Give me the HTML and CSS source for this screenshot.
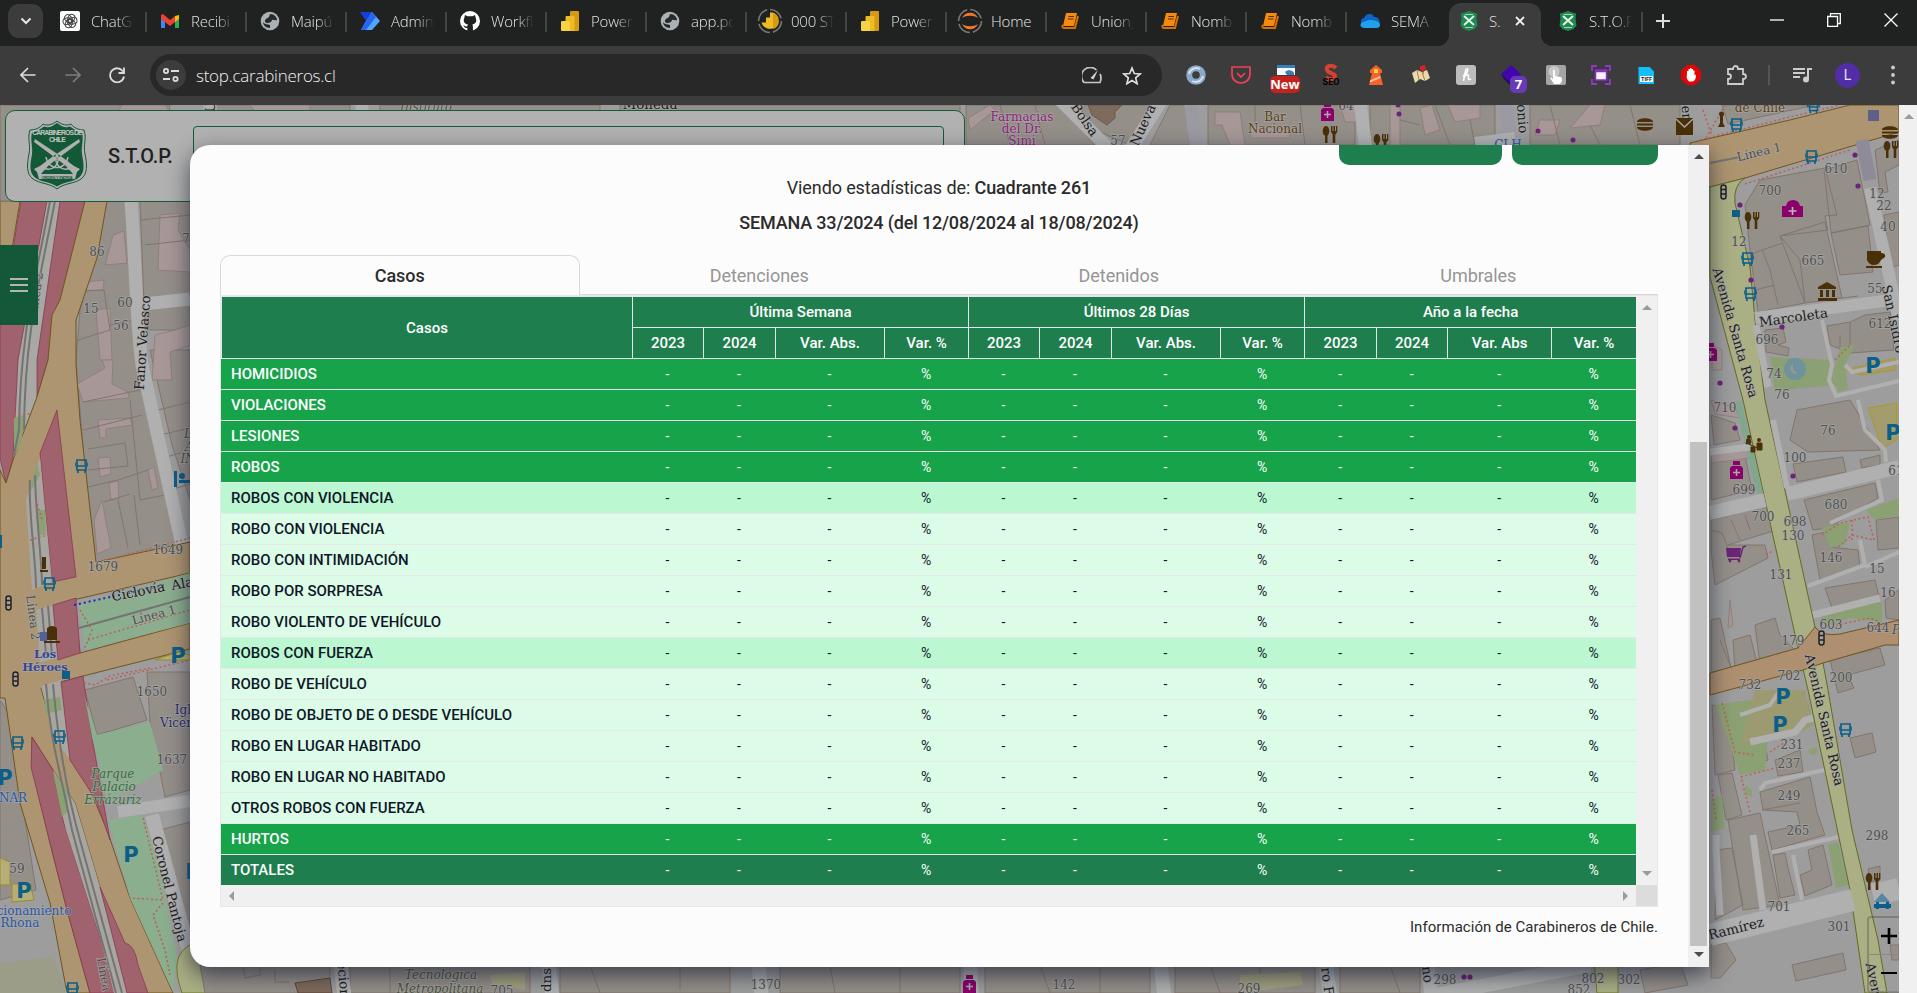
FILE: index.html
```html
<!DOCTYPE html>
<html lang="es">
<head>
<meta charset="utf-8">
<title>S.T.O.P.</title>
<link rel="stylesheet" href="styles.css">
</head>
<body>
<svg class="defs" width="0" height="0">
  <defs>
    <symbol id="shield" viewBox="0 0 62 70">
      <path d="M31 1c5 4 10 5 14 3 3 4 8 6 13 6 3 9-1 14 1 24 2 10 3 20-4 25-7 5-17 4-24 10-7-6-17-5-24-10-7-5-6-15-4-25 2-10-2-15 1-24 5 0 10-2 13-6 4 2 9 1 14-3z" fill="#b0b0b0" stroke="#145937" stroke-width="1"/>
      <path d="M31 3c5 4 9 5 13 3.500 4 3 7 5 12 6 2 8-1 13 0 22 2 10 3 18-3 23-6 5-15 4-22 9-7-5-16-4-22-9-6-5-5-13-3-23 1-9-2-14 0-22 5-1 8-3 12-6 4 1.500 8 .5 13-3.500z" fill="#145937"/>
      <path d="M9 19l27 18 12 9 6 3-6 6-9-10L8 22zM53 19L26 37l-12 9-6 3 6 6 9-10 31-23z" fill="#b0b0b0"/>
      <path d="M20 46c6-12 16-12 22 0M20 37c2 14 20 14 22 0M17 48c10 4 18-4 14-14M45 48c-10 4-18-4-14-14" fill="none" stroke="#b0b0b0" stroke-width="1.500"/>
      <path d="M11 52l5 2h30l5-2-2 7H13z" fill="#b0b0b0"/>
      <text x="31" y="15" class="crest">CARABINEROS DE</text><text x="31" y="22" class="crest">CHILE</text><text x="31" y="58.500" class="crest tiny">ORDEN Y PATRIA</text>
    </symbol>
    <symbol id="crest-sm" viewBox="0 0 18 20"><path d="M9 0l4 1.500 4 1-.5 5 1 7-3 3.500L9 20l-5.500-2-3-3.500 1-7-.5-5 4-1z" fill="#1f8a52"/><path d="M4 5l10 9M14 5L4 14" stroke="#e8f3ec" stroke-width="1.800"/><path d="M5 3.500h8M5 16.500h8" stroke="#a9d3ba"/></symbol>
    <symbol id="globe" viewBox="0 0 20 20"><circle cx="10" cy="10" r="9.300" fill="#aab0b5"/><path d="M10 3c4 0 7 3 7 6-2 1-3-1-5 0l-1 2-3 1c-3 0-4-2-2-4l3-2zM3 11c2 3 5 2 7 3l0 3c-4 0-7-3-7-6z" fill="#242827"/></symbol>
    <symbol id="pbi" viewBox="0 0 20 20"><rect x="10" y="0" width="9" height="20" rx="1" fill="#d39a12"/><rect x="5.500" y="5" width="9" height="15" rx="1" fill="#eebb22"/><rect x="1" y="10" width="9" height="10" rx="1" fill="#f7d348"/></symbol>
    <symbol id="book" viewBox="0 0 20 20"><path d="M6 2h11l-3 13H3z" fill="#f58a0c"/><path d="M18 5l-3 12H4c-2 0-2-2-1-3" fill="none" stroke="#d96e05" stroke-width="2"/><path d="M8.500 5.500h5.500M8 8h5.500" stroke="#4a3010" stroke-width="1.200"/></symbol>
    <symbol id="bus" viewBox="0 0 13 15"><path d="M2 1h9v10H2zM3 11v3M10 11v3M0 3.500v4M13 3.500v4M2 7h9" fill="none" stroke="#0b5f88" stroke-width="1.700"/></symbol>
    <symbol id="food" viewBox="0 0 16 17"><ellipse cx="4" cy="5" rx="3.300" ry="5"/><path d="M3 8h2.500v9H3zM9 0h1.500v5h1V0H13v5h1V0h1.300v6l-2 2.500V17h-2.600V8.500L9 6z"/></symbol>
    <symbol id="burger" viewBox="0 0 18 13"><path d="M1 4c0-5 16-5 16 0zM1 5.500h16v2H1zM1 9h16c0 5-16 5-16 0z"/></symbol>
    <symbol id="pill" viewBox="0 0 13 18"><path d="M3 0h7v4H3zM2 5h9l2 2v11H0V7z" fill="#8b006b"/><path d="M6.500 8v7M3 11.500h7" stroke="#aaa" stroke-width="1.600"/></symbol>
    <symbol id="light" viewBox="0 0 7 16"><rect x="1" y="1" width="5" height="14" rx="2.500" fill="#aaa09a" stroke="#222" stroke-width="1.500"/><path d="M1 5.500h5M1 10h5" stroke="#222" stroke-width="1.500"/></symbol>
  </defs>
</svg>

<header class="browser">
  <div class="tabstrip">
    <div class="tabsearch"><svg viewBox="0 0 12 8" width="12" height="8"><path d="M1.500 1.500L6 6l4.500-4.500" fill="none" stroke="#e6e6e6" stroke-width="2"/></svg></div>
    <div class="tab"><svg viewBox="0 0 20 20"><rect width="20" height="20" rx="2" fill="#fff"/><g fill="none" stroke="#444" stroke-width="1"><rect x="7" y="3" width="6.500" height="8.500" rx="3.200" transform="rotate(20 10 10)"/><rect x="7" y="3" width="6.500" height="8.500" rx="3.200" transform="rotate(80 10 10)"/><rect x="7" y="3" width="6.500" height="8.500" rx="3.200" transform="rotate(140 10 10)"/><rect x="7" y="3" width="6.500" height="8.500" rx="3.200" transform="rotate(200 10 10)"/><rect x="7" y="3" width="6.500" height="8.500" rx="3.200" transform="rotate(260 10 10)"/><rect x="7" y="3" width="6.500" height="8.500" rx="3.200" transform="rotate(320 10 10)"/></g></svg><span>ChatG</span></div>
    <div class="tab"><svg viewBox="0 0 20 20"><path d="M1 4v13h4V9z" fill="#4285f4"/><path d="M19 4v13h-4V9z" fill="#34a853"/><path d="M15 5l4-1v4l-4 3z" fill="#fbbc04"/><path d="M1 4l2-1 7 6 5-4v6l-5 4-9-7z" fill="#ea4335"/></svg><span>Recibi</span></div>
    <div class="tab"><svg><use href="#globe"/></svg><span>Maipú</span></div>
    <div class="tab"><svg viewBox="0 0 20 20"><path d="M0 1h12l-6 9z" fill="#1540d8"/><path d="M6 10L12 1l8 9-8 9H1z" fill="#55a6fb"/><path d="M6 10l6-9 4 5-10 13H1z" fill="#2765f5"/></svg><span>Admin</span></div>
    <div class="tab"><svg viewBox="0 0 20 20"><circle cx="10" cy="10" r="10" fill="#fff"/><path d="M5 4l2.500 1.300h5L15 4l.7 3c1.600 3-.1 6.200-3.500 6.500.8 1 .8 1.500.8 6.500H7.300v-3c-3 .5-3-2-4.500-2.500 2-.3 2.500 1.500 4.500 1 0-1 .3-1.500.8-2C4.400 13.200 2.700 10 4.300 7z" fill="#1f2221"/></svg><span>Workfl</span></div>
    <div class="tab"><svg><use href="#pbi"/></svg><span>Power</span></div>
    <div class="tab"><svg><use href="#globe"/></svg><span>app.po</span></div>
    <div class="tab"><svg class="wide" viewBox="0 0 26 26"><circle cx="13" cy="13" r="11.500" fill="none" stroke="#777" stroke-width="1.600" stroke-dasharray="15 3"/><path d="M13 4.500h3a8.500 8.500 0 1 1-11.500 10H9v-5h4z" fill="#eebb22"/><path d="M16 4.900a8.500 8.500 0 0 1 0 16.200z" fill="#d39a12"/></svg><span>000 ST</span></div>
    <div class="tab"><svg><use href="#pbi"/></svg><span>Power</span></div>
    <div class="tab"><svg class="wide" viewBox="0 0 26 26"><circle cx="13" cy="13" r="11.500" fill="none" stroke="#777" stroke-width="1.600" stroke-dasharray="15 3"/><path d="M5 10c3-7 13-7 16 0-4-3-12-3-16 0zM5 16c3 7 13 7 16 0-4 3-12 3-16 0z" fill="#f37726"/></svg><span class="full">Home</span></div>
    <div class="tab"><svg><use href="#book"/></svg><span>Union_</span></div>
    <div class="tab"><svg><use href="#book"/></svg><span>Nomb</span></div>
    <div class="tab"><svg><use href="#book"/></svg><span>Nomb</span></div>
    <div class="tab last"><svg viewBox="0 0 20 20"><path d="M4 14c-5-2-3-7 0-7 2-5 9-5 10-1 6-1 8 8 2 10z" fill="#0b66c8"/><path d="M4 17c-4 0-5-5-1-6l6-2c5 0 11 1 11 5 0 3-3 3-4 3z" fill="#22a0ee"/></svg><span>SEMA</span></div>
    <div class="tab active"><svg><use href="#crest-sm"/></svg><span class="full">S.</span><svg class="x" viewBox="0 0 10 10"><path d="M1 1l8 8M9 1L1 9" stroke="#eee" stroke-width="1.800"/></svg></div>
    <div class="tab after"><svg><use href="#crest-sm"/></svg><span>S.T.O.P</span></div>
    <svg class="plus" viewBox="0 0 14 14"><path d="M7 0v14M0 7h14" stroke="#ddd" stroke-width="2"/></svg>
    <div class="window">
      <svg viewBox="0 0 14 14"><path d="M0 7h14" stroke="#fff" stroke-width="1.300"/></svg>
      <svg viewBox="0 0 14 14"><path d="M.7 3.500h9.800v9.800H.7zM3.500 3.500V.7h9.800v9.800h-2.800" fill="none" stroke="#fff" stroke-width="1.300"/></svg>
      <svg viewBox="0 0 14 14"><path d="M.5.5l13 13M13.500.5l-13 13" stroke="#fff" stroke-width="1.300"/></svg>
    </div>
  </div>
  <div class="toolbar">
    <svg class="nav" viewBox="0 0 16 16"><path d="M15.500 8H1.500M8 1L1 8l7 7" fill="none" stroke="#ddd" stroke-width="1.700"/></svg>
    <svg class="nav" viewBox="0 0 16 16"><path d="M.5 8h14M8 1l7 7-7 7" fill="none" stroke="#7d7d7d" stroke-width="1.700"/></svg>
    <svg class="nav" viewBox="0 0 16 16"><path d="M14 4.500A7 7 0 1 0 15 9.500M15 .5v5.500H9.500" fill="none" stroke="#ddd" stroke-width="1.800"/></svg>
    <div class="omnibox">
      <div class="site"><svg width="16" height="14" viewBox="0 0 16 14"><path d="M8 3h8M0 11h7" stroke="#ddd" stroke-width="2"/><circle cx="3" cy="3" r="2.100" fill="none" stroke="#ddd" stroke-width="1.800"/><circle cx="12.500" cy="11" r="2.100" fill="none" stroke="#ddd" stroke-width="1.800"/></svg></div>
      <span class="url">stop.carabineros.cl</span>
      <svg width="20" height="17" viewBox="0 0 20 17"><path d="M14.500 3a8.600 8.600 0 0 0-12.500 12.500h16c1.300-3 1.300-6 0-8.500" fill="none" stroke="#c8c8c8" stroke-width="1.700"/><path d="M8.500 11L16 3l-4.500 9.500z" fill="#d0d0d0"/></svg>
      <svg width="20" height="19" viewBox="0 0 20 19"><path d="M10 2l2.300 5.500 5.900.5-4.500 3.900 1.400 5.800L10 14.600l-5.100 3.100 1.400-5.800L1.800 8l5.900-.5z" fill="none" stroke="#ddd" stroke-width="1.700"/></svg>
    </div>
    <div class="extensions">
      <i><svg viewBox="0 0 20 20"><circle cx="10" cy="10" r="6.800" fill="none" stroke="#8ba9c6" stroke-width="6"/><path d="M3 9a7.500 7.500 0 0 1 11-5M17 11a7.500 7.500 0 0 1-11 5" fill="none" stroke="#d3e0ee" stroke-width="2"/></svg></i>
      <i><svg viewBox="0 0 20 20"><path d="M1 2h18v7c0 12-18 12-18 0zM6 8l4 4 4-4" fill="none" stroke="#ef4056" stroke-width="1.700"/></svg></i>
      <i><svg viewBox="0 0 20 20"><path d="M1 0h18v10H1z" fill="#f5f8fa"/><path d="M1 0h18v3H1zM9 7c3-3 8-2 9 1v2h-7z" fill="#397fb5"/></svg><b class="new">New</b></i>
      <i><svg viewBox="0 0 20 20"><path d="M15 3C11-1 4 1 6 5s8 3 8 6-6 5-9 1" fill="none" stroke="#d8402f" stroke-width="4"/><text x="10" y="20" class="seo">SEO</text></svg></i>
      <i><svg viewBox="0 0 20 20"><path d="M4 5l6-5 6 5v3H4zM6 8h8l3 12H3z" fill="#f4642a"/><path d="M8 4h4v4H8z" fill="#ffd545"/><path d="M4 15.500l10-4.500 .5 2L4 17.500z" fill="#ffc2a0"/></svg></i>
      <i><svg viewBox="0 0 20 20"><path d="M1 8l5-3 5 2 5-2 3 8-5 3-5-2-5 4z" fill="#ead9ab"/><path d="M6 5l2 10M11 7l3 9" stroke="#a88247"/><path d="M9 1l5-1 1 4-2 2v4l-1-4-3-1z" fill="#d2222c"/></svg></i>
      <i><svg viewBox="0 0 20 20"><rect width="20" height="20" rx="3" fill="#bcbcbc"/><path d="M7.500 16L9.500 6c.5-3 3-3 2 0-.5 2-2 4-4.500 5M8.500 12c2-3 4.500-3 4 0s0 3 2.500 2" fill="none" stroke="#fff" stroke-width="1.600"/></svg></i>
      <i><svg viewBox="0 0 20 20"><path d="M10 0l10 9-10 9L0 9z" fill="#4206ac"/><path d="M0 9l10 9v3L3 14z" fill="#210764"/></svg><b class="seven">7</b></i>
      <i><svg viewBox="0 0 20 20"><rect width="20" height="20" rx="2" fill="#a5a5a5"/><circle cx="8" cy="6.500" r="5.500" fill="#c8c8c8"/><path d="M7 5c2-1 2 1 2 6l6 1c2 2 1 5-1 7H8l-4-6c1-1 2 0 3 1z" fill="#fff"/></svg></i>
      <i><svg viewBox="0 0 20 20"><path d="M1 6V1h5M14 1h5v5M19 14v5h-5M6 19H1v-5" fill="none" stroke="#9137c9" stroke-width="1.800"/><rect x="4.500" y="5" width="11" height="10" fill="#f8efff" stroke="#8a2ec6" stroke-width="1.500"/><path d="M4 6h12" stroke="#8a2ec6" stroke-width="2.500"/></svg></i>
      <i><svg viewBox="0 0 20 20"><path d="M2.500 2h11L18 6.500V19H2.500z" fill="#13c0fb"/><rect x="4" y="11" width="13" height="6" fill="#fff"/><text x="10.500" y="16.300" class="tiff">TIFF</text></svg></i>
      <i><svg viewBox="0 0 20 20"><path d="M6 0h8l6 6v8l-6 6H6l-6-6V6z" fill="#e30505"/><path d="M6 9V6h1.500V4H9V3h1.500v1H12v1.500h1.500v5l1.500-1c0 4-1 6-3 7H8c-2-2-3-4-2-7.500z" fill="#fff"/></svg></i>
      <i><svg viewBox="0 0 20 20"><path d="M2 4h5c0-4 5-4 5 0h5v5c4 0 4 5 0 5v5H2v-5c4 0 4-5 0-5z" fill="none" stroke="#ccc" stroke-width="1.800"/></svg></i>
    </div>
    <div class="rule"></div>
    <svg class="music" viewBox="0 0 20 16"><path d="M0 2h12M0 6h12M0 10h7" stroke="#ccc" stroke-width="1.800"/><path d="M15 12V2h4" fill="none" stroke="#ccc" stroke-width="2"/><circle cx="13" cy="12.500" r="3" fill="#ccc"/></svg>
    <div class="avatar">L</div>
    <svg class="dots" viewBox="0 0 4 20"><circle cx="2" cy="2.500" r="1.900"/><circle cx="2" cy="10" r="1.900"/><circle cx="2" cy="17.500" r="1.900"/></svg>
  </div>
</header>

<main class="page">
  <svg class="map" viewBox="0 105 1899 888" width="1899" height="888">
    <rect y="105" width="1899" height="888" fill="#9d9d9d"/>
    <!-- west blocks -->
    <g class="bld">
      <path d="M106 201L128 201 137 330 155 400 170 480 183 545 96 568 84 460 76 360 80 310z"/>
      <path d="M140 201H190V330H145zM150 350H190V500L172 445z"/>
      <path d="M85 690L133 677 147 720 97 735zM147 672H190V790L165 797 150 722z"/>
      <path d="M160 830L190 822V930L175 900zM0 700L8 712 22 800 36 890 0 900z"/>
    </g>
    <g class="pink">
      <path d="M113 235L124 231 127 263 105 265zM85 282L104 280 103 290 82 291zM96 310L110 308 112 360 100 360z"/>
      <path d="M160 215L180 213 178 230 190 250 190 272 158 270zM155 335L175 330 190 325V345L170 352 172 380H152z"/>
      <path d="M77 384L105 368 102 360H113L112 384 128 392 129 398 83 402zM98 420L130 418 132 425 106 429V438L100 438zM98 458L110 457 111 474 100 477zM94 520L102 500 111 548 97 554zM109 483L118 481 119 498 111 500zM148 470L154 467 158 488 152 490z"/>
    </g>
    <g class="lines"><path d="M83 402L140 390M83 430L142 415M88 449L125 443 128 466 88 470M88 487L118 480 148 470M104 502L130 494M118 500L128 548M134 495L140 545M130 400L140 500 165 495M158 410L190 402M160 435L190 428M163 458L190 450M170 490L190 484M140 220L190 215M145 245L190 240M80 291L104 290 110 330 78 340M110 325L135 320"/></g>
    <path d="M131 201C136 270 136 320 142 365L182 545" class="white" style="stroke-width:13"/>
    <path d="M144 304L190 299" class="white" style="stroke-width:13"/>
    <path d="M20 201H0V345L6 483 13 460 37 397 60 201z" fill="#a8a8a4"/>
    <path d="M0 201H20L13 243 0 320z" class="orange"/>
    <path d="M21 201H47L18 360 13 458 6 483 0 458V330L14 243z" class="mag"/>
    <path d="M60 201H85L61 315 48 360 37 397V360z" class="mag"/>
    <path d="M85 201H107L97 258 76 320V365L80 420 96 562 190 542V573L73 600 80 653 190 623V649L83 676 61 682 41 688 47 710 60 743 90 790 107 830 130 898 173 993H147L125 943 117 943 100 887 75 803 53 770 32 737 32 767 50 843 67 910 90 993H67L50 903 20 803 5 698H0V470L6 483 13 460 37 397 48 360 52 315 60 300z" class="orange"/>
    <path d="M57 410L76 577 52 582 40 453z" class="mag"/>
    <path d="M40 457L52 582 32 590 26 500z" fill="#a8a6a1"/>
    <path d="M36 610L54 605 59 658 40 662zM41 686L61 680 70 760 55 740z" fill="#a8a6a1"/>
    <path d="M53 605L76 598 80 653 58 660zM61 682L83 676 92 737 110 840 96 800 70 760z" class="mag"/>
    <path d="M32 737L53 770 63 820 100 937 118 993H90L67 910 50 843 31 767z" class="mag"/>
    <path d="M53 770L75 803 100 887 127 993H114L100 937 66 830z" fill="#a8a6a1"/>
    <path d="M100 887L125 943Q135 945 138 965L148 993H127z" class="mag"/>
    <path d="M14 418L24 415 22 440 14 457zM37 462L40 475 28 496zM37 510H45L46 535H38zM44 700L60 697 62 710 46 714zM53 772L68 790 67 812 62 817z" fill="#8ba073"/>
    <g class="rail"><path d="M50 201C38 270 20 330 19 430L14 455M55 201C40 280 25 330 24 430M30 480C28 510 36 560 36 588M35 475C36 520 42 560 42 585M42 608L46 655M48 606L52 655M46 684C50 740 60 770 72 830L116 993M53 684C58 740 66 790 80 840L122 993"/></g>
    <path d="M79 605L190 573V623L85 650z" fill="#8aae8e"/>
    <path d="M85 698L97 735 150 722 163 770 108 802 92 737z" fill="#8aae8e"/>
    <path d="M108 820L143 815 160 870 177 957 173 992 130 898z" fill="#8aae8e"/>
    <path d="M118 812L190 801" class="white" style="stroke-width:12"/>
    <path d="M152 815L190 955" class="white" style="stroke-width:14"/>
    <path d="M0 963L53 957 67 993H0z" fill="#9c9d88"/>
    <path d="M190 945C172 955 176 975 182 993H215L220 970z" fill="#abaf84" stroke="#6d7a25"/>
    <path d="M79 628L190 597" class="rail" style="stroke-width:2"/>
    <path d="M74 605L165 585" fill="none" stroke="#2226b5" stroke-width="2" stroke-dasharray="2 3"/>
    <g class="dots-red"><path d="M106 560L190 538M88 640L190 610M80 610L92 630 84 650M107 680L190 660M84 683L95 685 110 676 150 668M143 818L163 900 130 898M163 903L153 915 165 950 170 975M30 540L48 535M36 500L42 520M14 414L32 414"/></g>
    <path d="M0 858L10 862V885H0zM12 884L30 884 34 900 12 902zM155 660L178 652 190 655V660z" fill="#b5ae76" stroke="#9c8b2c"/>
    <g class="lbl">
      <text x="97" y="256">86</text><text x="91" y="313">15</text><text x="125" y="307">60</text><text x="121" y="330">56</text><text x="186" y="243">7</text>
      <text x="103" y="571">1679</text><text x="168" y="554">1649</text><text x="152" y="696">1650</text><text x="172" y="764">1637</text><text x="17" y="873">59</text>
      <text transform="translate(40 295) rotate(-82)">Línea 2</text><text transform="translate(29 618) rotate(83)">Línea 2</text><text transform="translate(155 619) rotate(-15)">Línea 1</text><text transform="translate(100 975) rotate(80)">Línea</text>
    </g>
    <g class="street">
      <text transform="translate(147 343) rotate(-86)">Fanor Velasco</text><text transform="translate(139 596) rotate(-11)">Ciclovía</text><text transform="translate(183 588) rotate(-11)">Ala</text><text transform="translate(165 890) rotate(76)">Coronel Pantoja</text>
    </g>
    <g class="place"><text x="45" y="658" class="bold">Los</text><text x="45" y="671" class="bold">Héroes</text><text x="13" y="802" fill="#2a58a8">NAR</text><text x="34" y="915" fill="#2a58a8">cionamiento</text><text x="20" y="927" fill="#2a58a8">Rhona</text><text x="183" y="714" fill="#2b2b66">Igl</text><text x="177" y="727" fill="#2b2b66">Vicen</text>
      <g class="it" fill="#2f7038"><text x="113" y="778">Parque</text><text x="114" y="791">Palacio</text><text x="113" y="804">Errázuriz</text></g><g class="it"><text x="188" y="438">L</text><text x="189" y="451">A</text><text x="188" y="463">IN</text></g></g>
    <g class="park"><text x="178" y="663">P</text><text x="131" y="862">P</text><text x="24" y="898">P</text><text x="5" y="785">P</text><text x="193" y="879">P</text></g>
    <g><use href="#bus" x="75" y="459" width="13" height="15"/><use href="#bus" x="43" y="577" width="13" height="15"/><use href="#bus" x="11" y="736" width="13" height="15"/><use href="#bus" x="53" y="730" width="13" height="15"/><use href="#bus" x="66" y="982" width="13" height="15"/><use href="#light" x="5" y="595" width="7" height="16"/><use href="#light" x="12" y="671" width="7" height="16"/></g>
    <path d="M62 671h8v8h-8zM0 535h2v13H0zM174 471h3v16h-3zM179 480h14v3h-14z" fill="#0b5f88"/><circle cx="182" cy="476" r="3" fill="#0b5f88"/>
    <path d="M40 632h7v9h-7z" fill="#54609a"/><path d="M47 628q5-4 10 0v12H47zM44 641h16v2H44zM42 557h4v12h-4zM40 570h8v2h-8z" fill="#4a3008"/>

    <!-- north strip -->
    <g class="bld"><path d="M0 105H170L160 201H0zM215 105H350V145H215zM380 105H600V145H380zM620 105H960V145H620zM966 105H1060L1095 145H966zM1065 105H1165L1130 145 1095 130zM1170 105H1190V145H1150zM1208 105H1355V145H1208zM1370 105H1495V145H1370zM1530 105H1680V145H1530z"/></g>
    <g class="pink"><path d="M122 105H165L170 112H118zM250 105H310V112H255zM968 118L990 105 995 110 970 130zM1070 105H1085L1080 118zM1215 112H1240L1245 145H1230L1222 125H1215zM1250 125L1290 130V138H1250zM1340 105H1360V122H1345zM1390 105H1400V145H1390zM1420 108L1432 105 1440 130 1425 135zM1448 105H1480V118L1455 122zM1540 120H1560L1555 135H1535zM1590 105H1605L1600 125 1570 128z"/></g>
    <g class="lines"><path d="M1000 105L1010 145M1035 105L1045 145M1255 105V125M1300 105L1305 145M1400 120L1420 125M1435 105L1450 145M1470 120L1475 145M1550 105L1560 145M1590 125L1600 145M1630 105L1640 145"/></g>
    <path d="M1088 105H1122L1115 112V118L1107 125 1092 115z" fill="#7f6b5b" stroke="#6e5a4b"/>
    <path d="M1060 100L1110 150M1165 95L1130 150M1360 100L1366 150M210 100V150M362 100V115" class="white" style="stroke-width:13"/>
    <path d="M1190 100L1197 150M1505 100L1512 150" class="white" style="stroke:#9b9aa2;stroke-width:13"/>
    <path d="M1475 143L1515 138" class="white" style="stroke-width:12"/>
    <g class="place"><text x="426" y="111" class="it">Instituto</text><g fill="#8f2479"><text x="1022" y="121">Farmacias</text><text x="1022" y="133">del Dr.</text><text x="1022" y="145">Simi</text></g><g fill="#5b4016"><text x="1275" y="121">Bar</text><text x="1275" y="133">Nacional</text></g><text x="1508" y="149" fill="#2a58a8">CLH</text></g>
    <g class="street"><text transform="translate(1081 122) rotate(55)">Bolsa</text><text transform="translate(1147 127) rotate(-66)">Nueva</text><text transform="translate(1518 119) rotate(86)">onio</text><text transform="translate(1682 113) rotate(83)">er</text><text transform="translate(215 107) rotate(-90)">U</text><text x="650" y="109">Moneda</text></g>
    <g class="lbl"><text x="1118" y="145">57</text><text x="1346" y="110">64</text></g>
    <use href="#pill" x="1321" y="103" width="13" height="18"/><g fill="#4a3008"><use href="#food" x="1322" y="126" width="16" height="17"/><use href="#food" x="1373" y="134" width="16" height="17"/><use href="#burger" x="1636" y="118" width="18" height="13"/></g>
    <g fill="#6c2476"><circle cx="1399" cy="114" r="2.500"/><circle cx="1398" cy="105" r="2.500"/><circle cx="1538" cy="131" r="2.500"/><circle cx="1573" cy="140" r="2.500"/></g>

    <!-- east blocks -->
    <g class="bld">
      <path d="M1722 105H1815L1728 124zM1745 205L1760 180 1825 168 1837 215 1825 216 1828 230 1780 236 1800 260 1805 303 1758 312 1750 250zM1824 170L1857 160 1870 225 1831 233zM1831 233L1868 226 1873 272 1840 275zM1780 236L1825 222 1842 298 1805 303zM1875 150L1899 140V165L1885 172 1888 192 1880 193zM1884 215L1899 212V265L1890 268z"/>
      <path d="M1765 330L1783 328 1786 342 1778 345 1789 348 1788 356 1766 352zM1827 326L1850 322 1865 315 1890 312 1894 350 1850 353 1830 345z"/>
      <path d="M1797 410L1850 400 1880 450 1808 452 1790 440zM1793 464L1843 457 1846 472 1797 482zM1860 460L1880 455V465L1862 468zM1804 500L1875 483 1878 498 1828 528 1813 530zM1812 535L1825 532 1830 547 1858 550 1860 568 1820 580zM1825 588L1875 580 1880 600 1832 608zM1876 520L1899 517V548L1878 550zM1885 600L1899 590V620L1886 618z"/>
      <path d="M1711 415L1735 423 1740 440 1714 445zM1711 460L1745 455 1752 490 1711 500zM1711 520L1770 505 1776 530 1728 545 1765 545 1768 558 1715 585 1711 550zM1711 620L1720 618 1732 672 1711 672zM1733 640L1750 635 1758 666 1735 670zM1755 625L1775 618 1780 635 1795 650 1760 665z"/>
      <path d="M1830 660L1880 648 1885 665 1848 675 1854 688 1838 693zM1850 738L1872 733 1876 752 1855 758zM1712 705L1728 708 1735 770 1715 775zM1760 715L1808 705 1812 725 1768 735zM1748 750L1765 746 1768 760 1752 765zM1775 760L1800 750 1803 772 1778 776zM1718 775L1732 773 1742 815 1726 820zM1760 792L1810 777 1817 812 1825 835 1772 850 1768 832 1800 825 1797 812 1763 810z"/>
      <path d="M1728 820L1760 813 1780 905 1743 910zM1716 850L1732 848 1743 905 1715 920zM1773 855L1785 853 1788 868 1795 895 1780 898zM1808 850L1823 845 1832 885 1805 896 1800 875 1812 870zM1711 945L1726 943 1736 960 1720 978H1711zM1792 965L1843 953 1846 970 1796 981zM1868 869L1880 866V880L1870 882zM1890 945H1899V960H1892z"/>
    </g>
    <g class="pink"><path d="M1711 400L1735 408 1740 418 1715 414zM1712 345L1722 350V370H1712zM1711 455L1750 450V458L1712 463zM1730 600L1733 625 1728 628z"/></g>
    <g class="lines"><path d="M1750 255L1762 250 1770 270 1778 305M1762 250L1783 243M1755 290L1775 285M1842 298L1858 296M1711 530L1722 533 1728 548M1731 520L1740 540M1745 515L1750 530M1720 640L1740 690M1840 355V335M1850 322V345M1762 810L1800 803"/></g>
    <path d="M1770 357L1832 360 1836 385 1800 388 1775 392zM1855 345L1840 347 1833 375 1838 392 1848 390 1845 365zM1822 527L1850 522 1845 545 1830 548zM1866 510L1899 498V515L1875 520zM1820 610L1882 602V622L1850 618 1825 627z" fill="#8ba073"/>
    <path d="M1715 705L1750 700 1770 715 1765 770 1740 775 1728 740zM1711 800L1722 795 1725 828 1711 832zM1828 845L1838 842 1848 885 1836 888zM1808 750L1817 747V754L1810 755zM1745 785L1752 790V797L1746 795z" fill="#8ba073"/>
    <path d="M1868 408L1897 403V440L1882 448zM1845 370L1895 358 1896 370 1860 375z" fill="#a39c6c" stroke="#aa9a28"/>
    <path d="M1755 690L1805 690 1813 725 1800 732 1760 740 1740 748 1745 725z" fill="#9c9a70"/>
    <circle cx="1795" cy="369" r="11" fill="#6f929c"/><path d="M1793 364a5 5 0 1 0 5 9q-6-2-5-9z" fill="#9b9694"/>
    <path d="M1690 143L1790 120 1850 105H1899V132L1745 178 1710 187 1690 190z" class="orange"/>
    <path d="M1710 187L1745 178Q1733 185 1735 203L1750 267 1756 330 1765 400 1815 627 1823 663 1828 690 1852 830 1878 940 1887 993H1865L1850 890 1808 690 1798 648 1765 500 1743 400 1710 277z" class="yel"/>
    <path d="M1738 402L1760 493" stroke="#7ea78b" stroke-width="6"/>
    <path d="M1710 673L1798 648 1815 627Q1822 637 1840 634L1899 620V645H1885L1823 663 1803 670 1710 695z" fill="#ae9070" stroke="#6f551e"/>
    <g class="white"><path d="M1755 318L1899 299" style="stroke-width:12"/><path d="M1862 140L1870 180" style="stroke:#8d8b98;stroke-width:13"/><path d="M1870 188L1899 320" style="stroke-width:12"/><path d="M1710 513L1765 500M1787 494L1899 467" style="stroke-width:14"/><path d="M1773 420L1787 488" style="stroke-width:6"/><path d="M1756 325L1768 387" style="stroke-width:7"/><path d="M1710 452L1750 447M1813 615L1880 598" style="stroke-width:7"/><path d="M1710 935L1853 900M1873 895L1899 889" style="stroke-width:22"/><path d="M1716 835V850L1720 915M1753 835L1763 910" style="stroke-width:7"/><path d="M1822 320L1832 365 1829 380 1836 396 1899 381M1858 400L1865 430 1885 450 1886 462M1878 480L1882 500 1830 523M1860 540L1865 565 1808 586M1865 567L1899 552M1760 790L1765 783 1824 770M1772 852L1838 837M1793 855L1802 900M1740 715L1770 705 1780 690M1845 365L1852 372 1899 362" style="stroke-width:4"/><path d="M1750 742L1795 732 1805 720 1813 718" style="stroke-width:7"/></g>
    <g class="dots-red"><path d="M1700 140L1790 117 1840 105M1745 184L1850 150M1703 110L1712 136M1725 105L1705 140M1835 360L1850 345M1822 535L1840 523 1868 517 1874 540 1852 535 1837 548M1852 520V540M1823 628L1870 618 1880 622M1722 703L1735 752 1755 755M1750 812L1741 777 1775 768M1712 790L1716 820M1766 555L1774 550M1770 752L1785 742"/></g>
    <path d="M1710 163L1740 157" class="rail" style="stroke-width:2"/>
    <g class="lbl"><text x="1836" y="173">610</text><text x="1770" y="195">700</text><text x="1877" y="198">12</text><text x="1884" y="210">22</text><text x="1888" y="231">40</text><text x="1739" y="246">12</text><text x="1813" y="265">665</text><text x="1875" y="293">55</text><text x="1880" y="328">612</text><text x="1767" y="344">696</text><text x="1774" y="378">74</text><text x="1782" y="399">76</text><text x="1725" y="412">710</text><text x="1828" y="435">76</text><text x="1795" y="462">100</text><text x="1744" y="494">699</text><text x="1836" y="509">680</text><text x="1763" y="521">700</text><text x="1795" y="526">698</text><text x="1793" y="540">130</text><text x="1831" y="562">146</text><text x="1781" y="579">131</text><text x="1877" y="573">15</text><text x="1888" y="597">16</text><text x="1896" y="475">61</text><text x="1831" y="629">603</text><text x="1878" y="632">644</text><text x="1793" y="645">179</text><text x="1789" y="680">702</text><text x="1750" y="689">732</text><text x="1841" y="682">200</text><text x="1792" y="749">231</text><text x="1789" y="768">237</text><text x="1789" y="800">249</text><text x="1798" y="835">265</text><text x="1877" y="840">298</text><text x="1779" y="911">701</text><text x="1839" y="931">301</text><text transform="translate(1760 156) rotate(-14)">Línea 1</text></g>
    <g class="street"><text transform="translate(1794 322) rotate(-8)">Marcoleta</text><text transform="translate(1731 334) rotate(74)">Avenida Santa Rosa</text><text transform="translate(1820 721) rotate(77)">Avenida Santa Rosa</text><text transform="translate(1889 320) rotate(78)">San Isidro</text><text transform="translate(1737 933) rotate(-14)">Ramírez</text><text transform="translate(1869 980) rotate(78)">Aven</text></g>
    <g class="place"><text x="1760" y="112" fill="#5b4016">de Chile</text><text x="1896" y="634" class="it" fill="#2f7038">P</text></g>
    <g class="park"><text x="1873" y="373">P</text><text x="1893" y="440">P</text><text x="1783" y="704">P</text><text x="1780" y="732">P</text></g>
    <g><use href="#bus" x="1730" y="118" width="13" height="15"/><use href="#bus" x="1807" y="101" width="13" height="13"/><use href="#bus" x="1805" y="150" width="13" height="15"/><use href="#bus" x="1741" y="252" width="13" height="15"/><use href="#bus" x="1744" y="287" width="13" height="15"/><use href="#bus" x="1839" y="723" width="13" height="15"/><use href="#light" x="1720" y="184" width="7" height="16"/><use href="#light" x="1818" y="630" width="7" height="16"/></g>
    <g fill="#4a3008"><use href="#food" x="1744" y="212" width="16" height="17"/><use href="#food" x="1883" y="141" width="16" height="17"/><use href="#food" x="1865" y="873" width="16" height="17"/><use href="#burger" x="1881" y="126" width="18" height="13"/><path d="M1676 118h17v17h-17zM1818 287L1827 282 1836 287V289H1818zM1820 290h3v7h-3zM1826 290h3v7h-3zM1832 290h3v7h-3zM1818 298h19v3h-19zM1867 251h14v2q5 0 4 4l-4 3q-2 5-7 5t-7-5zM1866 266h16v2h-16zM1720 115h3v8l2 4h-7l2-4z"/><circle cx="1721.500" cy="114" r="2.500"/><path d="M1747 439l3 0 1 4-5 1zM1746 443l12 5M1757 443h5v7h-5zM1751 447h4v5h-4z" stroke="#4a3008"/><circle cx="1749" cy="437" r="2"/><circle cx="1759" cy="440" r="2"/></g>
    <path d="M1676 119l8.500 8 8.500-8" fill="none" stroke="#aaa" stroke-width="1.300"/>
    <path d="M1782 206h4q1-6 7-6t7 6h3v11h-21z" fill="#8b006b"/><path d="M1792.500 207v8M1788.500 211h8" stroke="#bbb" stroke-width="1.600"/>
    <use href="#pill" x="1730" y="461" width="13" height="18"/><use href="#pill" x="1704" y="343" width="13" height="18"/>
    <path d="M1726 548h15l-1 9h-13zM1728 558.500h12v1.500h-12z" fill="#6c2476"/><path d="M1740 558l3-11 3-1" fill="none" stroke="#6c2476" stroke-width="1.500"/><g fill="#6c2476"><circle cx="1730" cy="561" r="1.400"/><circle cx="1739" cy="561" r="1.400"/></g>
    <path d="M1732 210h8v7h-8zM1874 904h17v4h-17zM1876 901h3v8h-3zM1886 901h3v8h-3z" fill="#0b5f88"/><path d="M1874 902l8-9 8 9z" fill="#5387a3"/><path d="M1868 110h11v11h-11z" fill="#5d6187"/>
    <g fill="#6c2476"><circle cx="1855" cy="155" r="2.600"/><circle cx="1858" cy="186" r="2.600"/><circle cx="1740" cy="205" r="2.600"/><circle cx="1751" cy="280" r="2.600"/><circle cx="1782" cy="327" r="2.600"/><circle cx="1720" cy="383" r="2.600"/><circle cx="1735" cy="428" r="2.600"/><circle cx="1793" cy="476" r="2.600"/></g>

    <!-- south strip -->
    <g class="bld"><path d="M200 965H330V993H205zM350 965H530V993H350zM560 965H730V993H560zM780 965H960V993H780zM985 965H1150V993H985zM1175 965H1315V993H1175zM1340 965H1420V993H1340zM1640 970L1680 963 1688 985 1645 993z"/></g>
    <g class="lines"><path d="M243 965L245 978 260 975V965M275 970V982H290M390 965V993M590 965L600 993M680 965V990M830 965L835 993M900 965V993M1040 965L1050 993M1100 965V993M1210 965L1220 993M1260 965V985M1390 965L1400 993"/></g>
    <path d="M295 983L330 978 332 993H298z" fill="#7f6b5b" stroke="#5d4738"/>
    <path d="M340 960L345 1000M548 960L553 1000M758 960L762 1000M970 960L972 1000M1160 960L1165 1000M1325 960L1331 1000M1427 960L1432 1000M1435 995L1590 965" class="white" style="stroke-width:14"/>
    <path d="M1594 960H1618V993H1597z" fill="#abaf84" stroke="#717428"/>
    <path d="M1240 975L1300 972 1303 985 1240 993zM490 975L525 972V990L492 985z" fill="#a2a07f"/>
    <g class="place"><g class="it"><text x="441" y="979">Tecnológica</text><text x="440" y="993">Metropolitana</text></g></g>
    <g class="lbl"><text x="502" y="995">705</text><text x="766" y="989">1370</text><text x="1064" y="989">142</text><text x="1249" y="993">269</text><text x="1445" y="984">298</text><text x="1593" y="983">802</text><text x="1629" y="984">302</text><text x="1579" y="994">852</text></g>
    <g class="street"><text transform="translate(339 980) rotate(85)">ecion</text><text transform="translate(551 980) rotate(-90)">dns</text><text transform="translate(1323 982) rotate(83)">ro F</text><text transform="translate(1423 975) rotate(83)">no</text></g>
    <use href="#pill" x="963" y="975" width="13" height="18"/><g fill="#6c2476"><circle cx="1464" cy="977" r="2.600"/><circle cx="1470" cy="977" r="2.600"/></g>
  </svg>

  <div class="searchpanel">
    <svg class="logo" width="62" height="70"><use href="#shield"/></svg>
    <span class="brand">S.T.O.P.</span>
    <div class="field"></div>
  </div>
  <div class="menu"><span></span><span></span><span></span></div>
  <div class="zoomctl"><svg viewBox="0 0 16 16" width="16" height="16"><path d="M8 0v16M0 8h16" stroke="#000" stroke-width="2.600"/></svg><svg viewBox="0 0 16 16" width="16" height="16"><path d="M0 8h16" stroke="#000" stroke-width="2"/></svg></div>
  <div class="pagebar"><i class="up"></i></div>

  <section class="modal">
    <div class="content">
      <div class="buttons"><b></b><b></b></div>
      <p class="viewing">Viendo estadísticas de: <strong>Cuadrante 261</strong></p>
      <p class="week">SEMANA 33/2024 (del 12/08/2024 al 18/08/2024)</p>
      <nav class="tabs"><a class="on">Casos</a><a>Detenciones</a><a>Detenidos</a><a>Umbrales</a></nav>
      <div class="tablebox">
        <table>
          <colgroup><col class="c0"><col class="c71"><col class="c72"><col class="c109"><col class="c84"><col class="c71"><col class="c72"><col class="c109"><col class="c84"><col class="c72"><col class="c71"><col class="c104"><col class="c85"></colgroup>
          <thead>
            <tr><th rowspan="2">Casos</th><th colspan="4">Última Semana</th><th colspan="4">Últimos 28 Días</th><th colspan="4">Año a la fecha</th></tr>
            <tr><th>2023</th><th>2024</th><th>Var. Abs.</th><th>Var. %</th><th>2023</th><th>2024</th><th>Var. Abs.</th><th>Var. %</th><th>2023</th><th>2024</th><th>Var. Abs</th><th>Var. %</th></tr>
          </thead>
          <tbody>
            <tr class="main"><th>HOMICIDIOS<td>-<td>-<td>-<td>%<td>-<td>-<td>-<td>%<td>-<td>-<td>-<td>%
            <tr class="main"><th>VIOLACIONES<td>-<td>-<td>-<td>%<td>-<td>-<td>-<td>%<td>-<td>-<td>-<td>%
            <tr class="main"><th>LESIONES<td>-<td>-<td>-<td>%<td>-<td>-<td>-<td>%<td>-<td>-<td>-<td>%
            <tr class="main"><th>ROBOS<td>-<td>-<td>-<td>%<td>-<td>-<td>-<td>%<td>-<td>-<td>-<td>%
            <tr class="group"><th>ROBOS CON VIOLENCIA<td>-<td>-<td>-<td>%<td>-<td>-<td>-<td>%<td>-<td>-<td>-<td>%
            <tr><th>ROBO CON VIOLENCIA<td>-<td>-<td>-<td>%<td>-<td>-<td>-<td>%<td>-<td>-<td>-<td>%
            <tr><th>ROBO CON INTIMIDACIÓN<td>-<td>-<td>-<td>%<td>-<td>-<td>-<td>%<td>-<td>-<td>-<td>%
            <tr><th>ROBO POR SORPRESA<td>-<td>-<td>-<td>%<td>-<td>-<td>-<td>%<td>-<td>-<td>-<td>%
            <tr><th>ROBO VIOLENTO DE VEHÍCULO<td>-<td>-<td>-<td>%<td>-<td>-<td>-<td>%<td>-<td>-<td>-<td>%
            <tr class="group"><th>ROBOS CON FUERZA<td>-<td>-<td>-<td>%<td>-<td>-<td>-<td>%<td>-<td>-<td>-<td>%
            <tr><th>ROBO DE VEHÍCULO<td>-<td>-<td>-<td>%<td>-<td>-<td>-<td>%<td>-<td>-<td>-<td>%
            <tr><th>ROBO DE OBJETO DE O DESDE VEHÍCULO<td>-<td>-<td>-<td>%<td>-<td>-<td>-<td>%<td>-<td>-<td>-<td>%
            <tr><th>ROBO EN LUGAR HABITADO<td>-<td>-<td>-<td>%<td>-<td>-<td>-<td>%<td>-<td>-<td>-<td>%
            <tr><th>ROBO EN LUGAR NO HABITADO<td>-<td>-<td>-<td>%<td>-<td>-<td>-<td>%<td>-<td>-<td>-<td>%
            <tr><th>OTROS ROBOS CON FUERZA<td>-<td>-<td>-<td>%<td>-<td>-<td>-<td>%<td>-<td>-<td>-<td>%
            <tr class="main"><th>HURTOS<td>-<td>-<td>-<td>%<td>-<td>-<td>-<td>%<td>-<td>-<td>-<td>%
            <tr class="total"><th>TOTALES<td>-<td>-<td>-<td>%<td>-<td>-<td>-<td>%<td>-<td>-<td>-<td>%
          </tbody>
        </table>
        <div class="vbar"><i class="up"></i><i class="down"></i></div>
        <div class="hbar"><i class="left"></i><i class="right"></i></div>
        <div class="corner"></div>
      </div>
      <p class="source">Información de Carabineros de Chile.</p>
    </div>
    <div class="modalbar"><i class="up"></i><div class="thumb"></div><i class="down"></i></div>
  </section>
</main>
</body>
</html>
```

FILE: styles.css
```css
* { box-sizing: border-box; }
body { margin: 0; width: 1917px; height: 993px; overflow: hidden; font-family: Roboto, sans-serif; background: #3c3c3c; }
.defs { position: absolute; }
p { margin: 0; }

/* browser frame */
.browser { height: 105px; background: #3c3c3c; font-family: "Open Sans", "Noto Sans", sans-serif; }
.tabstrip { height: 46px; background: #1f2221; display: flex; align-items: flex-start; padding-left: 8px; }
.tabsearch { width: 35px; height: 34px; margin: 4px 4px 0 0; border-radius: 11px; background: #3c3c3c; display: flex; align-items: center; justify-content: center; flex: none; }
.tab { flex: none; width: 100px; height: 42px; padding: 0 8px 0 13px; display: flex; align-items: center; gap: 11px; background: linear-gradient(#444, #444) right 0 top 12px / 2px 20px no-repeat; }
.tab svg { width: 20px; height: 20px; flex: none; }
.tab svg.wide { width: 26px; height: 26px; margin: 0 -3px; }
.tab span { flex: 1; white-space: nowrap; font-size: 15px; line-height: 24px; font-weight: 300; color: #e4e4e4; letter-spacing: -.2px; -webkit-mask-image: linear-gradient(90deg, #000 26px, transparent 43px); mask-image: linear-gradient(90deg, #000 26px, transparent 43px); }
.tab span.full { -webkit-mask-image: none; mask-image: none; }
.tab.last { background: none; width: 102px; padding-right: 10px; }
.tab.active { position: relative; width: 92px; height: 43px; margin-top: 3px; padding: 0 16px 7px 10px; background: #3c3c3c; border-radius: 12px 12px 0 0; gap: 10px; }
.tab.active::before, .tab.active::after { content: ""; position: absolute; bottom: 0; width: 12px; height: 12px; }
.tab.active::before { left: -12px; background: radial-gradient(circle at 0 0, #1f2221 12px, #3c3c3c 12.5px); }
.tab.active::after { right: -12px; background: radial-gradient(circle at 100% 0, #1f2221 12px, #3c3c3c 12.5px); }
.tab.active svg.x { width: 10px; height: 10px; }
.tab.after { width: 102px; padding: 0 8px 0 17px; }
.plus { width: 14px; height: 14px; margin: 14px 0 0 13px; flex: none; }
.window { margin: 13px 19px 0 auto; display: flex; gap: 43px; }
.window svg { width: 14px; height: 14px; }
.toolbar { height: 58px; display: flex; align-items: center; padding-left: 20px; border-radius: 9px 9px 0 0; }
.nav { width: 16px; height: 16px; margin-right: 28.5px; flex: none; }
.omnibox { width: 1012px; height: 42px; border-radius: 21px; background: #282828; display: flex; align-items: center; padding: 0 20px 0 6px; gap: 20px; margin-left: -3.5px; flex: none; }
.site { width: 30px; height: 30px; border-radius: 50%; background: #3c3c3c; display: flex; align-items: center; justify-content: center; }
.url { flex: 1; margin-left: -10px; font-size: 17px; font-weight: 300; color: #f0f0f0; letter-spacing: -.25px; }
.extensions { display: flex; margin-left: 11px; }
.extensions i { position: relative; width: 45px; height: 40px; display: flex; align-items: center; justify-content: center; font-style: normal; flex: none; }
.extensions svg { width: 20px; height: 20px; overflow: visible; }
.extensions b { position: absolute; color: #fff; border-radius: 5px; text-align: center; line-height: 17px; height: 17px; top: 21px; font-size: 13px; }
.extensions b.new { width: 30px; left: 7px; background: #c5221f; }
.extensions b.seven { width: 17px; left: 22px; background: #673ab7; }
.seo { font: bold 9px Roboto; fill: #000; text-anchor: middle; }
.tiff { font: bold 5.5px Roboto; fill: #222; text-anchor: middle; }
.rule { width: 2px; height: 20px; background: #555; margin-left: 10px; }
.music { width: 20px; height: 16px; margin-left: 23px; }
.avatar { width: 25px; height: 25px; border-radius: 50%; background: #512da8; color: #e8e0f4; font: 14px/25px Roboto; text-align: center; margin-left: 22px; }
.dots { width: 4px; height: 20px; fill: #ccc; margin-left: 31px; }

/* map */
.page { position: relative; height: 888px; overflow: hidden; }
.map { position: absolute; left: 0; top: 0; font-family: "DejaVu Serif", serif; }
.bld path { fill: #948f89; stroke: #83756d; stroke-width: 1; }
.pink path { fill: #a79797; stroke: #8b7b74; stroke-width: .8; }
.lines path { fill: none; stroke: #83756d; stroke-width: 1; }
.white { fill: none; stroke: #b0b0b0; }
.orange { fill: #ae9571; stroke: #71551c; stroke-width: 1; }
.mag { fill: #a0626d; stroke: #8a3951; stroke-width: .8; }
.yel { fill: #abaf84; stroke: #666a20; stroke-width: 1; }
.rail { fill: none; stroke: #747474; stroke-width: 2; }
.rail path { fill: none; }
.dots-red path { fill: none; stroke: #ba6058; stroke-width: 1.5; stroke-dasharray: 2 2.5; }
.lbl text, .street text, .place text { text-anchor: middle; font-size: 12px; paint-order: stroke; stroke: #aaa; stroke-width: 1.6px; stroke-opacity: .75; }
.lbl text { fill: #4f4f4f; }
.street text { fill: #1d1d1d; font-size: 13.4px; }
.place text.bold { font-weight: bold; font-size: 11.5px; fill: #394593; }
.place .it { font-style: italic; fill: #4d523c; }
.place g.it[fill] text { fill: #2f7038; }
.park text { font: bold 21px "DejaVu Sans"; fill: #0b5f88; text-anchor: middle; }
.crest { font: bold 6.8px "Liberation Sans"; fill: #c4c4c4; text-anchor: middle; letter-spacing: -.9px; }
.crest.tiny { font-size: 4px; fill: #145937; letter-spacing: -.2px; }

/* controls over the map */
.searchpanel { position: absolute; left: 5px; top: 5px; width: 960px; height: 92px; border: 1px solid #145c39; border-radius: 10px; background: #b1b1b1; display: flex; padding-left: 20px; }
.logo { margin-top: 9px; flex: none; }
.brand { margin: 31px 0 0 20px; width: 65px; font-size: 20px; line-height: 28px; font-weight: 500; color: #222; letter-spacing: -.2px; flex: none; }
.field { margin: 15px 0 0 20px; width: 751px; height: 60px; border: 1px solid #145c39; border-radius: 4px; }
.menu { position: absolute; left: 0; top: 140px; width: 38px; height: 80px; background: #145937; display: flex; flex-direction: column; justify-content: center; align-items: center; gap: 4px; }
.menu span { width: 18px; height: 2px; background: #b4b4b4; }
.zoomctl { position: absolute; left: 1867px; top: 811px; width: 38px; height: 77px; border: 2px solid rgba(70,70,60,.35); border-radius: 4px; display: flex; flex-direction: column; }
.zoomctl svg { width: 36px; height: 37px; padding: 10px 8px 10px 12px; border-bottom: 1px solid #888; box-sizing: border-box; flex: none; }
.pagebar { position: absolute; left: 1899px; top: 0; width: 18px; height: 888px; background: #f0f0f0; padding: 9px 5px; }
i.up, i.down, i.left, i.right { display: block; width: 0; height: 0; border: 5px solid transparent; }
i.up { border-top: 0; border-bottom-color: #9b9b9b; }
i.down { border-bottom: 0; border-top-color: #9b9b9b; }
i.left { border-left: 0; border-right-color: #9b9b9b; }
i.right { border-right: 0; border-left-color: #9b9b9b; }

/* dialog */
.modal { position: absolute; left: 190px; top: 40px; width: 1519px; height: 822px; background: #fcfcfc; border-radius: 20px 0 0 20px; display: flex; box-shadow: 0 8px 22px rgba(15,20,40,.65); }
.content { width: 1498px; padding: 0 30px; color: #2b2b2b; }
.buttons { display: flex; justify-content: flex-end; gap: 10px; height: 20px; }
.buttons b { background: #1f7e4e; width: 163px; height: 20px; border-radius: 0 0 10px 10px; }
.buttons b + b { width: 146px; }
.viewing, .week { text-align: center; font-size: 18px; line-height: 35px; }
.viewing { margin-top: 5px; letter-spacing: -.11px; }
.week { letter-spacing: -.18px; }
.viewing strong, .week { font-weight: 500; }
.tabs { display: flex; height: 40px; margin-top: 15px; border-bottom: 1px solid #d9d9dc; }
.tabs a { flex: none; width: 25%; text-align: center; font-size: 18px; line-height: 41px; color: #959595; letter-spacing: -.05px; }
.tabs a.on { color: #2b2b2b; font-weight: 500; border: 1px solid #d9d9dc; border-bottom: 0; border-radius: 10px 10px 0 0; background: #fcfcfc; height: 40px; line-height: 39px; }
.tablebox { border: 1px solid #e5e7eb; width: 1438px; height: 612px; display: grid; grid-template-columns: 1415px 21px; grid-template-rows: 589px 21px; background: #f0f0f0; }
table { table-layout: fixed; width: 1415px; border-collapse: separate; border-spacing: 0; font-size: 15px; line-height: 30px; color: #0f172a; }
.c0 { width: 411px; } .c71 { width: 71px; } .c72 { width: 72px; } .c109 { width: 109px; } .c84 { width: 84px; } .c104 { width: 104px; } .c85 { width: 85px; }
th, td { padding: 0; height: 31px; text-align: center; font-weight: 500; border-top: 1px solid #e5e7eb; }
thead th { background: #1f7e4e; color: #fff; border-left: 1px solid #e5e7eb; }
td { font-weight: 400; font-size: 14px; }
tbody th { text-align: left; padding-left: 10px; }
tbody tr { background: #dcfce7; }
tbody tr.group { background: #bbf7d0; }
tbody tr.main { background: #16a34a; color: #fff; }
tbody tr.total { background: #1f7e4e; color: #fff; }
.vbar { display: flex; flex-direction: column; justify-content: space-between; align-items: center; padding: 9px 0; }
.hbar { display: flex; justify-content: space-between; align-items: center; padding: 0 8px; }
.corner { background: #dcdcdc; }
.source { text-align: right; font-size: 15px; line-height: 24px; margin-top: 8px; letter-spacing: .05px; }
.modalbar { width: 21px; background: #f0f0f0; display: flex; flex-direction: column; align-items: center; padding: 9px 0 10px; }
.modalbar i.up { border-bottom-color: #4d4d4d; }
.modalbar i.down { border-top-color: #4d4d4d; margin-top: 6px; }
.thumb { width: 17px; height: 504px; background: #c1c1c1; margin-top: auto; }
```
